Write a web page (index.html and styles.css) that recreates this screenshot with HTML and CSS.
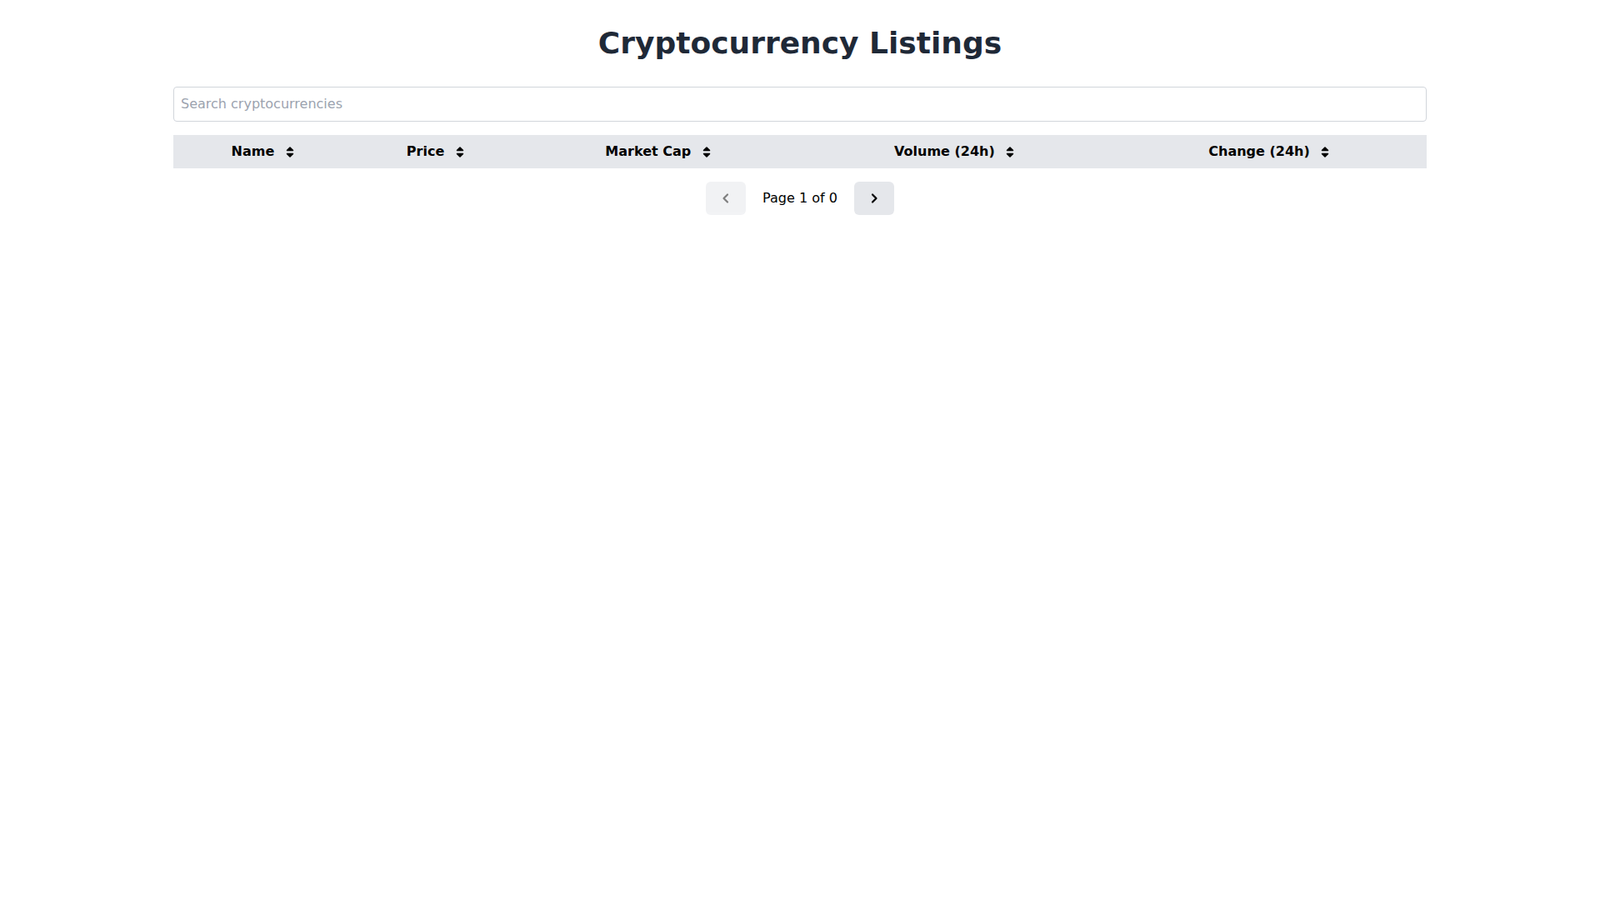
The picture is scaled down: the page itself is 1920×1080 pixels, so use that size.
FILE: index.html
```html
<!DOCTYPE html>
<html lang="en">
<head>
    <meta charset="UTF-8">
    <meta name="viewport" content="width=device-width, initial-scale=1.0">
    <title>Cryptocurrency Listings</title>
    <link rel="stylesheet" href="styles.css">
</head>
<body>
    <div class="container">
        <h1>Cryptocurrency Listings</h1>
        <input type="text" class="search" placeholder="Search cryptocurrencies">
        <table class="listings">
            <thead>
                <tr>
                    <th>Name <svg class="sort" viewBox="0 0 10 14"><path d="M1.2 5.6h7.6c.7 0 1-.8.6-1.3L5.6.5a.8.8 0 0 0-1.2 0L.6 4.3c-.4.5-.1 1.3.6 1.3zM8.8 8.4H1.2c-.7 0-1 .8-.6 1.3l3.8 3.8c.3.3.9.3 1.2 0l3.8-3.8c.4-.5.1-1.3-.6-1.3z"/></svg></th>
                    <th>Price <svg class="sort" viewBox="0 0 10 14"><path d="M1.2 5.6h7.6c.7 0 1-.8.6-1.3L5.6.5a.8.8 0 0 0-1.2 0L.6 4.3c-.4.5-.1 1.3.6 1.3zM8.8 8.4H1.2c-.7 0-1 .8-.6 1.3l3.8 3.8c.3.3.9.3 1.2 0l3.8-3.8c.4-.5.1-1.3-.6-1.3z"/></svg></th>
                    <th>Market Cap <svg class="sort" viewBox="0 0 10 14"><path d="M1.2 5.6h7.6c.7 0 1-.8.6-1.3L5.6.5a.8.8 0 0 0-1.2 0L.6 4.3c-.4.5-.1 1.3.6 1.3zM8.8 8.4H1.2c-.7 0-1 .8-.6 1.3l3.8 3.8c.3.3.9.3 1.2 0l3.8-3.8c.4-.5.1-1.3-.6-1.3z"/></svg></th>
                    <th>Volume (24h) <svg class="sort" viewBox="0 0 10 14"><path d="M1.2 5.6h7.6c.7 0 1-.8.6-1.3L5.6.5a.8.8 0 0 0-1.2 0L.6 4.3c-.4.5-.1 1.3.6 1.3zM8.8 8.4H1.2c-.7 0-1 .8-.6 1.3l3.8 3.8c.3.3.9.3 1.2 0l3.8-3.8c.4-.5.1-1.3-.6-1.3z"/></svg></th>
                    <th>Change (24h) <svg class="sort" viewBox="0 0 10 14"><path d="M1.2 5.6h7.6c.7 0 1-.8.6-1.3L5.6.5a.8.8 0 0 0-1.2 0L.6 4.3c-.4.5-.1 1.3.6 1.3zM8.8 8.4H1.2c-.7 0-1 .8-.6 1.3l3.8 3.8c.3.3.9.3 1.2 0l3.8-3.8c.4-.5.1-1.3-.6-1.3z"/></svg></th>
                </tr>
            </thead>
            <tbody></tbody>
        </table>
        <div class="pagination">
            <button class="page-btn" disabled>
                <svg viewBox="0 0 16 16"><path d="M10 3.5 5.5 8l4.5 4.5"/></svg>
            </button>
            <span class="page-info">Page 1 of 0</span>
            <button class="page-btn">
                <svg viewBox="0 0 16 16"><path d="M6 3.5 10.5 8 6 12.5"/></svg>
            </button>
        </div>
    </div>
</body>
</html>
```

FILE: styles.css
```css
* {
    box-sizing: border-box;
}
body {
    margin: 0;
    font-family: "DejaVu Sans", Verdana, sans-serif;
    background: #fff;
}
.container {
    max-width: 1536px;
    margin: 0 auto;
    padding: 32px 16px;
}
h1 {
    margin: 0 0 32px;
    font-size: 36px;
    line-height: 40px;
    font-weight: 700;
    text-align: center;
    color: #1f2937;
}
.search {
    display: block;
    width: 100%;
    margin-bottom: 16px;
    padding: 8px;
    font-family: inherit;
    font-size: 16px;
    line-height: 24px;
    border: 1px solid #d1d5db;
    border-radius: 4px;
    outline: none;
}
.search::placeholder {
    color: #9ca3af;
}
.listings {
    width: 100%;
    border-collapse: collapse;
}
.listings th {
    padding: 8px;
    background: #e5e7eb;
    font-size: 16px;
    line-height: 24px;
    font-weight: 700;
    color: #000;
    text-align: center;
    white-space: nowrap;
}
.sort {
    width: 10px;
    height: 13px;
    margin-left: 8px;
    vertical-align: -2px;
    fill: #000;
}
.pagination {
    display: flex;
    justify-content: center;
    align-items: center;
    gap: 20px;
    margin-top: 16px;
}
.page-btn {
    display: flex;
    align-items: center;
    justify-content: center;
    width: 48px;
    height: 40px;
    padding: 0;
    border: none;
    border-radius: 6px;
    background: #e5e7eb;
    cursor: pointer;
}
.page-btn svg {
    width: 16px;
    height: 16px;
    fill: none;
    stroke: #000;
    stroke-width: 2.2;
    stroke-linecap: round;
    stroke-linejoin: round;
}
.page-btn:disabled {
    opacity: 0.5;
    cursor: default;
}
.page-info {
    font-size: 16px;
    line-height: 24px;
    color: #000;
}
```
